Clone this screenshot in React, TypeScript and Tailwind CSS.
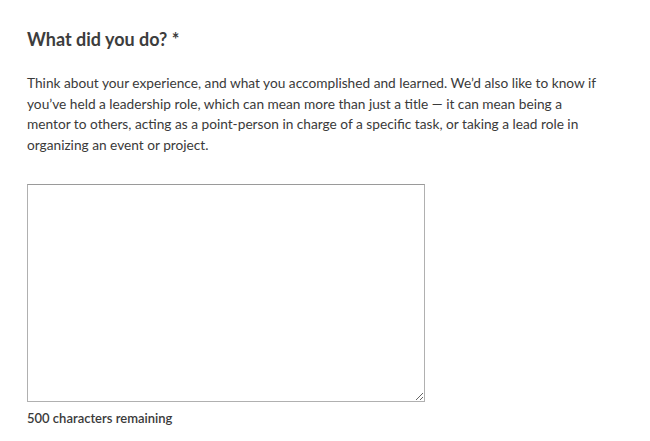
import React, { useState } from 'react';

const MAX = 500;

const App: React.FC = () => {
    const [text, setText] = useState<string>('');

    return (
        <div className="min-h-[441px] w-[650px] bg-white px-[27px] pt-[27px] text-[#3a3a3a] font-['Lato','Open_Sans',sans-serif]">
            <h2 className="text-[18px] font-bold leading-[24px] text-[#3d3d3d]">What did you do? *</h2>

            <p className="mt-[22px] text-[13.7px] leading-[20.5px] text-[#3a3a3a]">
                Think about your experience, and what you accomplished and learned. We’d also like to know if<br />
                you’ve held a leadership role, which can mean more than just a title — it can mean being a<br />
                mentor to others, acting as a point-person in charge of a specific task, or taking a lead role in<br />
                organizing an event or project.
            </p>

            {/* Answer box */}
            <textarea
                value={text}
                maxLength={MAX}
                onChange={(e) => setText(e.target.value)}
                className="mt-[29px] block h-[218px] w-[398px] border border-[#b0b0b0] border-t-[#9a9a9a] bg-white p-2 text-[14px] outline-none"
            />

            <div className="mt-[7px] text-[13px] font-semibold text-[#3a3a3a]">
                {MAX - text.length} characters remaining
            </div>
        </div>
    );
};

export default App;
